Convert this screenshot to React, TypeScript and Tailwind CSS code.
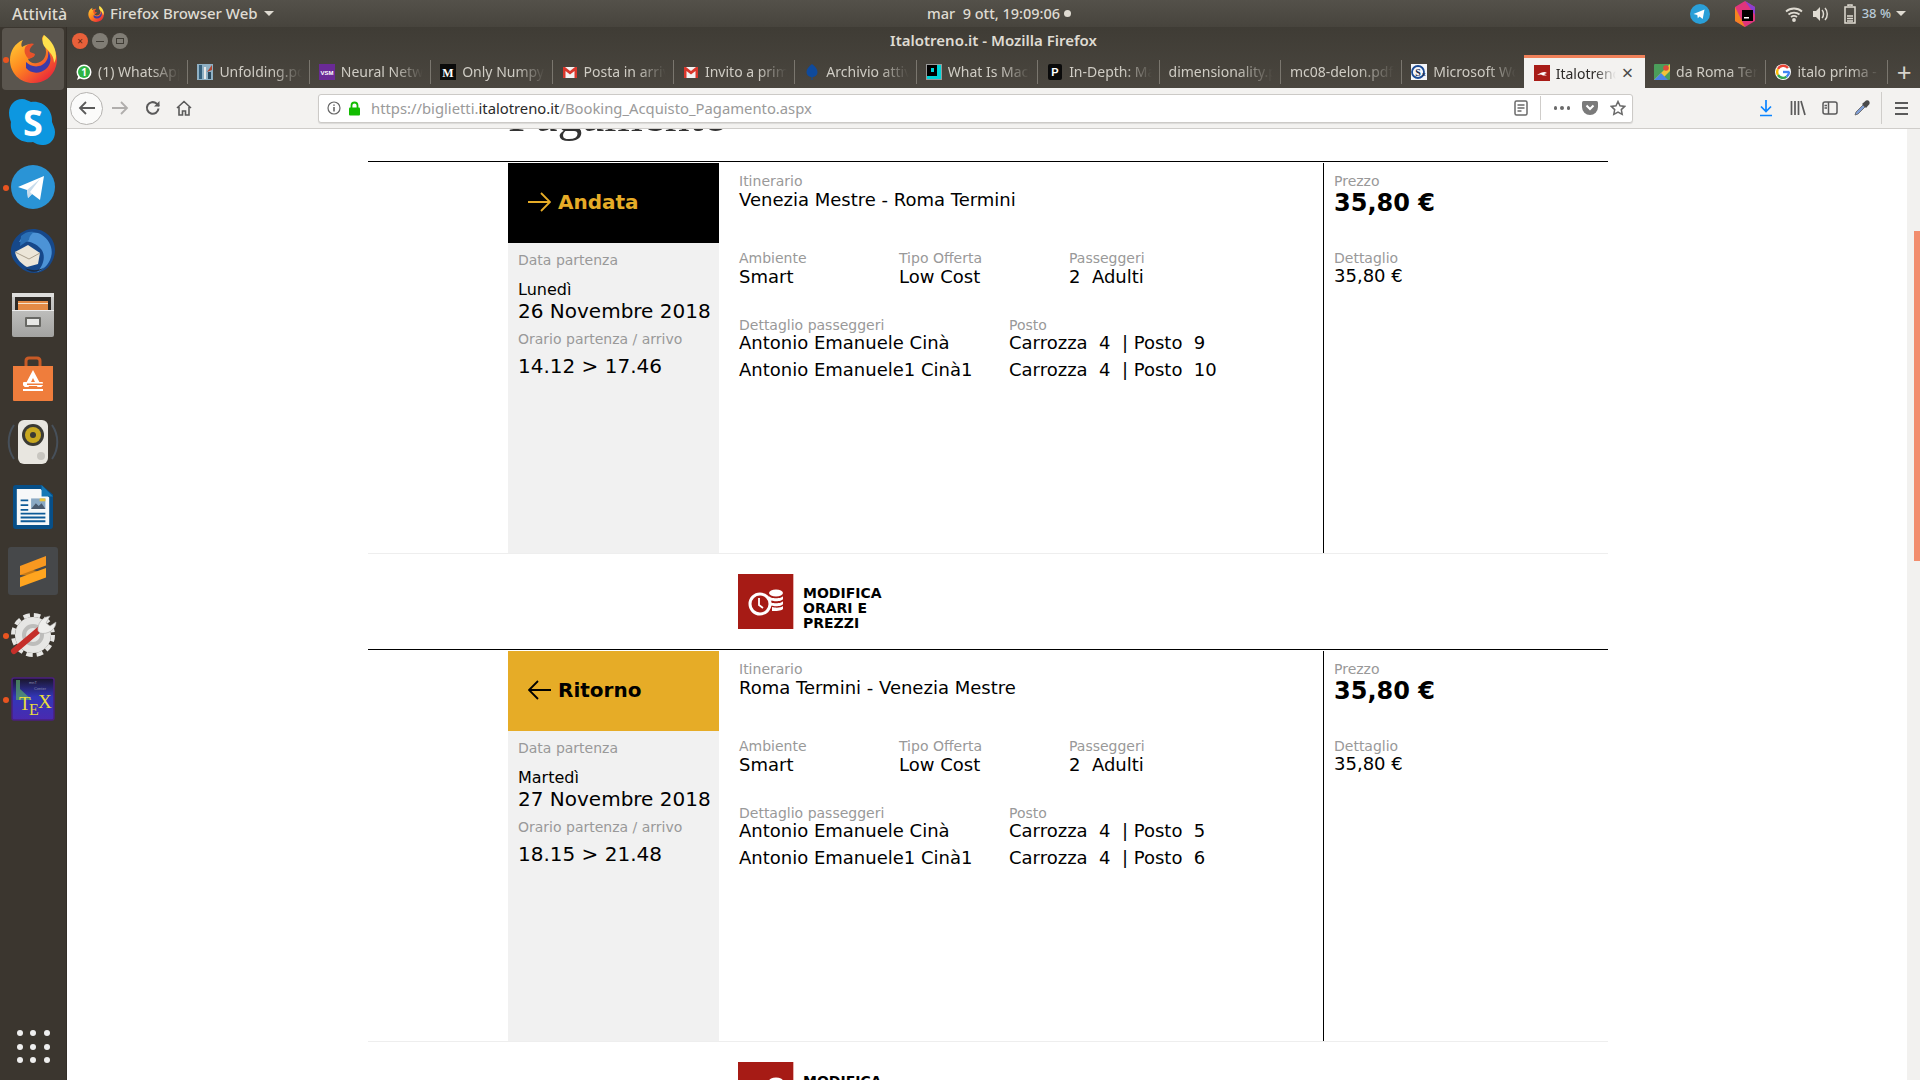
import React from "react";

const sans = "font-['DejaVu_Sans',sans-serif]";
const ui = "font-['Noto_Sans',sans-serif]";

// --- favicons ---
const Gmail = () => (
  <svg width="16" height="16" viewBox="0 0 16 16">
    <rect x="1" y="3" width="14" height="11" fill="#f2f2f2" />
    <path d="M1 3h2l5 4 5-4h2v11h-2.500V7L8 10.500 3.500 7v7H1z" fill="#d9372c" />
  </svg>
);
const tabs: { label: string; icon: React.ReactNode; active?: boolean }[] = [
  {
    label: "(1) WhatsApp",
    icon: (
      <svg width="16" height="18" viewBox="0 0 16 18">
        <circle cx="8" cy="9" r="7.500" fill="#fff" />
        <path d="M1 17l1.500-4.500L5 15z" fill="#fff" />
        <circle cx="8" cy="9" r="6" fill="#2fb344" />
        <text x="8" y="12.500" textAnchor="middle" fontSize="10" fontWeight="700" fill="#fff" fontFamily="Noto Sans">1</text>
      </svg>
    ),
  },
  {
    label: "Unfolding.pdf",
    icon: (
      <svg width="16" height="16" viewBox="0 0 16 16">
        <rect width="16" height="16" fill="#8fb0c4" />
        <rect x="2" y="1" width="3" height="14" fill="#35607c" />
        <rect x="7" y="3" width="2" height="12" fill="#e8e8e8" />
        <path d="M10 8l5-7v5z" fill="#b2452f" />
        <rect x="11" y="8" width="3" height="7" fill="#2a4a60" />
      </svg>
    ),
  },
  {
    label: "Neural Network",
    icon: (
      <svg width="16" height="16" viewBox="0 0 16 16">
        <rect width="16" height="16" fill="#6a2a96" />
        <text x="8" y="10.500" textAnchor="middle" fontSize="6" fontWeight="700" fill="#fff" fontFamily="Liberation Sans">VSM</text>
      </svg>
    ),
  },
  {
    label: "Only Numpy",
    icon: (
      <svg width="16" height="16" viewBox="0 0 16 16">
        <rect width="16" height="16" fill="#0b0b0b" />
        <text x="8" y="12.500" textAnchor="middle" fontSize="12" fontWeight="700" fill="#fff" fontFamily="Liberation Serif">M</text>
      </svg>
    ),
  },
  { label: "Posta in arrivo", icon: <Gmail /> },
  { label: "Invito a prima", icon: <Gmail /> },
  {
    label: "Archivio attività",
    icon: (
      <svg width="16" height="18" viewBox="0 0 16 18">
        <path d="M8 1c3 2 5.500 5 5.500 8S11 14 8 14s-5.500-2-5.500-5S5 3 8 1z" fill="#0f4a9c" />
        <rect x="7.500" y="13" width="1" height="4" fill="#0f4a9c" />
      </svg>
    ),
  },
  {
    label: "What Is Machine",
    icon: (
      <svg width="16" height="18" viewBox="0 0 16 18">
        <rect x="0" y="1" width="16" height="16" fill="#999" />
        <rect x="1" y="2" width="14" height="14" fill="#00d5d8" />
        <rect x="1" y="2" width="10" height="11" fill="#000" />
        <rect x="5" y="5" width="3" height="4" fill="#00d5d8" />
      </svg>
    ),
  },
  {
    label: "In-Depth: Machine",
    icon: (
      <svg width="16" height="16" viewBox="0 0 16 16">
        <rect width="14" height="16" x="1" rx="2" fill="#0a0a0a" />
        <text x="8" y="12" textAnchor="middle" fontSize="11" fontWeight="700" fill="#fff" fontFamily="Liberation Sans">P</text>
      </svg>
    ),
  },
  { label: "dimensionality.pdf", icon: null },
  { label: "mc08-delon.pdf", icon: null },
  {
    label: "Microsoft Word",
    icon: (
      <svg width="16" height="16" viewBox="0 0 16 16">
        <rect width="16" height="16" fill="#f4f6fa" />
        <circle cx="7" cy="8" r="6" fill="none" stroke="#1b4a94" strokeWidth="1.800" />
        <text x="7" y="11.500" textAnchor="middle" fontSize="10" fontWeight="700" fill="#1b2a4a" fontFamily="Liberation Serif">S</text>
        <text x="13" y="12" textAnchor="middle" fontSize="6" fontWeight="700" fill="#1b2a4a" fontFamily="Liberation Sans">x</text>
      </svg>
    ),
  },
  {
    label: "Italotreno.it",
    active: true,
    icon: (
      <svg width="16" height="16" viewBox="0 0 16 16">
        <rect width="16" height="16" fill="#a81c17" />
        <path d="M3 10c3-2 5-3 8-3l2 1-3 1 3 1.500H9L7 9.500z" fill="#fff" />
      </svg>
    ),
  },
  {
    label: "da Roma Termini",
    icon: (
      <svg width="16" height="18" viewBox="0 0 16 18">
        <rect y="1" width="16" height="16" rx="1" fill="#4b9e5b" />
        <path d="M0 17L16 1v7l-9 9z" fill="#f2c33b" />
        <path d="M0 17l7-7 7 7z" fill="#4c84e8" />
        <circle cx="12" cy="5" r="2.800" fill="#dc4b3e" />
      </svg>
    ),
  },
  {
    label: "italo prima - Google",
    icon: (
      <svg width="16" height="16" viewBox="0 0 16 16">
        <circle cx="8" cy="8" r="8" fill="#fff" />
        <path d="M14.500 8H8" stroke="#4285f4" strokeWidth="2.400" fill="none" />
        <path d="M13 4A6 6 0 0 0 3 5" stroke="#ea4335" strokeWidth="2.400" fill="none" />
        <path d="M3 5a6 6 0 0 0 0 6" stroke="#fbbc05" strokeWidth="2.400" fill="none" />
        <path d="M3 11a6 6 0 0 0 8.500 1.800" stroke="#34a853" strokeWidth="2.400" fill="none" />
        <path d="M11.500 12.800A6 6 0 0 0 14 8" stroke="#4285f4" strokeWidth="2.400" fill="none" />
      </svg>
    ),
  },
];

// --- dock icons ---
const FirefoxIcon = ({ size = 54 }: { size?: number }) => (
  <svg width={size} height={size} viewBox="0 0 54 54">
    <defs>
      <linearGradient id="ffa" x1="0" y1="0" x2="0.800" y2="1">
        <stop offset="0" stopColor="#ffd93b" />
        <stop offset="0.500" stopColor="#ff8a1f" />
        <stop offset="1" stopColor="#e8213c" />
      </linearGradient>
    </defs>
    <path d="M38 3c1 4 3 6 7 10 6 7 7 14 5 21-3 11-12 17-23 17C14 51 4 41 4 28 4 19 9 11 17 8c-2 3-2 5-1 7 3-2 7-3 10-3-3 3-5 5-4 8l6 2c1 3-4 4-6 5 1 3 5 5 9 4 5-1 9-5 9-11 0-6-3-10-4-13 0-2 1-3 2-4z" fill="url(#ffa)" />
    <path d="M38 3c4 3 12 10 12 21 0 3-1 5-2 7 0-9-7-13-10-17-2-3-2-7 0-11z" fill="#ffe14d" />
    <path d="M20 30c4 4 10 6 16 3 5-3 7-8 6-14 4 6 3 14-2 18-6 5-15 5-20-1z" fill="#3d3aa8" />
    <path d="M20 14c3-3 7-3 8-2-3 3-5 5-4 8l5 2c0 3-4 4-6 5-4-3-6-9-3-13z" fill="#e8512a" />
  </svg>
);

const Dock = () => {
  const items: { dot?: boolean; active?: boolean; icon: React.ReactNode }[] = [
    { active: true, dot: true, icon: <FirefoxIcon /> },
    {
      icon: (
        <svg width="50" height="50" viewBox="0 0 50 50">
          <path d="M14 1c4 0 6 2 9 3 12-2 22 8 21 20 1 3 3 6 3 10 0 8-6 14-13 13-3 0-6-1-9-3C12 46 1 36 3 24c-1-3-2-5-2-9C1 7 7 1 14 1z" fill="#0d97e0" />
          <text x="25" y="38" textAnchor="middle" fontSize="36" fontWeight="700" fill="#fff" fontFamily="Open Sans">S</text>
        </svg>
      ),
    },
    {
      dot: true,
      icon: (
        <svg width="46" height="46" viewBox="0 0 46 46">
          <circle cx="23" cy="23" r="22" fill="#2a94d6" />
          <path d="M8 23l26-11-4 24-8-6-4 4-1-8z" fill="#fff" />
          <path d="M17 26l13-11-10 13 2 2-4 4z" fill="#c8dcec" />
        </svg>
      ),
    },
    {
      icon: (
        <svg width="48" height="48" viewBox="0 0 48 48">
          <path d="M24 2c12 0 22 9 22 21s-9 23-20 23c-6 0-11-2-15-6C4 34 2 29 2 24 2 13 12 2 24 2z" fill="#16488a" />
          <path d="M10 15c5-9 15-12 23-7 9 6 12 16 8 25-3 6-7 10-13 12 7-7 9-17 4-23-6-7-15-9-22-7z" fill="#4c93d6" />
          <path d="M12 9c4-4 9-5 13-4-3 2-5 5-5 8l-9 6z" fill="#2a6fb5" />
          <path d="M6 25l13-7 12 8-2 11-11 3c-6-3-11-9-12-15z" fill="#ece6d8" />
          <path d="M6 25l14 7 11-6" stroke="#a99f8c" strokeWidth="1" fill="none" />
          <path d="M16 41c7 3 14 3 20-1-5 5-14 7-20 1z" fill="#1d2a3c" />
        </svg>
      ),
    },
    {
      icon: (
        <svg width="44" height="46" viewBox="0 0 44 46">
          <defs>
            <linearGradient id="cab" x1="0" y1="0" x2="0" y2="1">
              <stop offset="0" stopColor="#cfcfcd" />
              <stop offset="1" stopColor="#a3a3a1" />
            </linearGradient>
          </defs>
          <rect x="1" y="1" width="42" height="44" rx="2" fill="url(#cab)" />
          <rect x="1" y="1" width="42" height="4" fill="#dededc" />
          <rect x="4" y="5" width="36" height="13" fill="#2e2a26" />
          <rect x="7" y="9" width="30" height="9" fill="#e38a45" />
          <rect x="7" y="11" width="30" height="1" fill="#f5e2cc" />
          <rect x="1" y="18" width="42" height="1" fill="#eee" />
          <rect x="14" y="25" width="16" height="10" rx="1" fill="#686864" />
          <rect x="16" y="27" width="12" height="6" fill="#e8e8e6" />
        </svg>
      ),
    },
    {
      icon: (
        <svg width="42" height="46" viewBox="0 0 42 46">
          <path d="M14 12V5q0-3 3-3h8q3 0 3 3v7" fill="none" stroke="#c85a26" strokeWidth="3" />
          <path d="M1 10h40v34q0 1-1 1H2q-1 0-1-1z" fill="#ef7d3c" />
          <path d="M21 14l9 17h-4.500L21 22l-4.500 9H12z" fill="#fff" />
          <rect x="11" y="26" width="20" height="4" rx="1" fill="#fff" />
          <rect x="15" y="27.500" width="16" height="1.500" fill="#ef7d3c" />
          <rect x="11" y="33" width="20" height="2" fill="#fff" />
        </svg>
      ),
    },
    {
      icon: (
        <svg width="52" height="52" viewBox="0 0 52 52">
          <path d="M7 8a30 30 0 0 0 0 34M45 8a30 30 0 0 1 0 34" fill="none" stroke="#47505a" strokeWidth="2" />
          <rect x="11" y="3" width="30" height="44" rx="6" fill="#e8e6e0" />
          <circle cx="26" cy="18" r="11" fill="#3a3a34" />
          <circle cx="26" cy="18" r="8" fill="#c8a820" />
          <circle cx="26" cy="18" r="3" fill="#3a3a34" />
          <circle cx="34" cy="39" r="4" fill="#c8c6c0" />
        </svg>
      ),
    },
    {
      icon: (
        <svg width="40" height="46" viewBox="0 0 42 46">
          <path d="M3 0h27l12 10v33q0 3-3 3H3q-3 0-3-3V3q0-3 3-3z" fill="#074f88" />
          <path d="M4 4h25l9 9v29H4z" fill="#f6f8f9" />
          <path d="M30 0l12 12H30z" fill="#1578b5" />
          <path d="M8 15h8v2H8zm0 5h8v2H8zm0 5h8v2H8zm0 4h26v2H8zm0 4h26v2H8zm0 4h26v2H8z" fill="#0d5a97" />
          <rect x="19" y="14" width="15" height="11" fill="#8aa9c4" />
          <path d="M19 25l5-6 3 3 3-3 4 6z" fill="#4a5a6e" />
          <rect x="28" y="14" width="6" height="3" fill="#e8c43c" />
        </svg>
      ),
    },
    {
      icon: (
        <svg width="50" height="48" viewBox="0 0 50 48">
          <rect width="50" height="48" rx="3" fill="#46484a" />
          <path d="M12 19l26 8v3l-26-2z" fill="#c77a17" />
          <path d="M12 19L38 9v9.500L12 28z" fill="#f89820" />
          <path d="M38 21v9.500L12 40v-9.500z" fill="#ffa51f" />
        </svg>
      ),
    },
    {
      dot: true,
      icon: (
        <svg width="48" height="44" viewBox="0 0 48 44">
          <circle cx="24" cy="22" r="18" fill="#e6e6e4" />
          <circle cx="24" cy="22" r="20" fill="none" stroke="#e6e6e4" strokeWidth="4" strokeDasharray="6.500 4" />
          <circle cx="24" cy="22" r="9" fill="none" stroke="#bdbdbb" strokeWidth="4" />
          <path d="M5 38L31 16" stroke="#c52f2a" strokeWidth="6" strokeLinecap="round" />
          <path d="M29 18c-1-7 4-14 12-15l-4 7 4 3 6-4c0 8-9 13-16 11z" fill="#eeeeec" stroke="#a8a8a6" strokeWidth="0.600" />
        </svg>
      ),
    },
    {
      dot: true,
      icon: (
        <svg width="44" height="44" viewBox="0 0 44 44">
          <defs>
            <linearGradient id="texbg" x1="0" y1="0" x2="0" y2="1">
              <stop offset="0" stopColor="#1a1528" />
              <stop offset="0.450" stopColor="#3236b8" />
              <stop offset="1" stopColor="#4a2ab0" />
            </linearGradient>
          </defs>
          <rect x="1" y="1" width="42" height="42" rx="2" fill="url(#texbg)" stroke="#4b1f80" strokeWidth="1.500" />
          <path d="M5 3h4v9l12 11H5z" fill="#58a66a" opacity="0.700" />
          <text x="18" y="7" fontSize="4" fill="#8a8aa8" fontFamily="Liberation Sans">mnT</text>
          <text x="23" y="13" fontSize="4" fill="#8a8aa8" fontFamily="Liberation Sans">Center</text>
          <text x="8" y="33" fontSize="19" fill="#eadf3a" fontFamily="Liberation Serif">T</text>
          <text x="18" y="38" fontSize="16" fill="#eadf3a" fontFamily="Liberation Serif">E</text>
          <text x="27" y="31" fontSize="19" fill="#eadf3a" fontFamily="Liberation Serif">X</text>
        </svg>
      ),
    },
  ];
  return (
    <div className="flex w-[67px] shrink-0 flex-col border-r border-[#332e28] bg-[#3b362f]">
      {items.map((item, i) => (
        <div key={i} className="relative flex h-[64px] w-full items-center justify-center">
          {item.active && <div className="absolute left-[2px] top-[1px] h-[62px] w-[62px] rounded bg-[#5a554e]" />}
          {item.dot && <div className="absolute left-[3px] top-[30px] h-[6px] w-[6px] rounded-full bg-[#e95420]" />}
          <div className="relative flex">{item.icon}</div>
        </div>
      ))}
      <div className="mt-auto mb-[17px] grid grid-cols-3 gap-[7.500px] self-center">
        {[0, 1, 2, 3, 4, 5, 6, 7, 8].map((n) => (
          <div key={n} className="h-[6px] w-[6px] rounded-full bg-[#eeeeee]" />
        ))}
      </div>
    </div>
  );
};

const TopBar = () => (
  <div className={`${ui} flex h-[27px] shrink-0 items-center bg-gradient-to-b from-[#54514a] to-[#47443d] text-[15px] font-medium text-[#dfdbd2]`}>
    <div className="flex w-[927px] items-center">
      <span className="ml-[12px] w-[75px] text-[16px]">Attività</span>
      <FirefoxIcon size={18} />
      <span className="ml-[5px]">Firefox Browser Web</span>
      <div className="ml-[6px] h-0 w-0 border-x-[5px] border-t-[5px] border-x-transparent border-t-[#dfdbd2]" />
    </div>
    <span className="whitespace-pre text-[14.500px]">mar  9 ott, 19:09:06</span>
    <div className="ml-[4px] h-[7px] w-[7px] rounded-full bg-[#dfdbd2]" />
    <div className="ml-auto flex items-center">
      <svg width="20" height="20" viewBox="0 0 20 20">
        <circle cx="10" cy="10" r="10" fill="#2a9fd8" />
        <path d="M3.500 10l11-4.500-1.800 9.500-3.200-2.400-1.700 1.700-.5-3.400z" fill="#fff" />
      </svg>
      <svg width="22" height="26" viewBox="0 0 22 26" className="ml-[24px]">
        <path d="M11 0l10 6v14l-10 6-10-6V6z" fill="#e0357c" />
        <path d="M11 0l10 6v8z" fill="#8a3fd0" />
        <path d="M1 6v14l10 6z" fill="#f58220" />
        <rect x="8" y="9" width="11" height="11" fill="#000" />
        <rect x="10" y="16" width="5" height="1.500" fill="#fff" />
      </svg>
      <svg width="18" height="16" viewBox="0 0 18 16" className="ml-[29px]" fill="none" stroke="#dfdbd2" strokeWidth="1.800">
        <path d="M1 5.500c4.500-4 11.500-4 16 0M3.500 8.500c3-2.600 8-2.600 11 0M6 11c1.800-1.300 4.200-1.300 6 0" />
        <circle cx="9" cy="14" r="1" fill="#dfdbd2" />
      </svg>
      <svg width="16" height="16" viewBox="0 0 16 16" className="ml-[10px]" fill="#dfdbd2">
        <path d="M0 5h3l4-4v14l-4-4H0z" />
        <path d="M9 4c2 2 2 6 0 8M12 2c3 3 3 9 0 12" stroke="#dfdbd2" strokeWidth="1.500" fill="none" />
      </svg>
      <svg width="12" height="20" viewBox="0 0 12 20" className="ml-[15px]" fill="none" stroke="#dfdbd2" strokeWidth="1.500">
        <path d="M4 2V1h4v1M1 3h10v16H1z" />
        <path d="M3 12h6M3 14.500h6M3 17h6" />
      </svg>
      <span className="ml-[6px] text-[13px] text-[#b9cbd8]">38 %</span>
      <div className="ml-[5px] mr-[14px] h-0 w-0 border-x-[5px] border-t-[5px] border-x-transparent border-t-[#dfdbd2]" />
    </div>
  </div>
);

const Tab = ({ label, icon, active }: { label: string; icon: React.ReactNode; active?: boolean }) => (
  <div
    className={
      active
        ? "flex h-[33px] w-[121.400px] shrink-0 items-center gap-[6px] border-t-[3px] border-[#f0815a] bg-[#f3f2f0] pl-[10px] pr-[12px] text-[#2c2a28]"
        : "flex h-[33px] w-[121.400px] shrink-0 items-center gap-[6px] pl-[9px] pr-[8px] text-[#cfccc4]"
    }
  >
    {icon && <div className="flex w-[16px] shrink-0 justify-center">{icon}</div>}
    <span className="min-w-0 flex-1 overflow-hidden whitespace-nowrap [mask-image:linear-gradient(to_right,black_65%,transparent)]">{label}</span>
    {active && <span className="text-[20px] leading-none text-[#4a4a48]">×</span>}
  </div>
);

const TabBar = () => (
  <div className={`${ui} flex h-[33px] items-end text-[14px]`}>
    {tabs.map((t, i) => (
      <React.Fragment key={t.label}>
        <Tab {...t} />
        {i < tabs.length - 1 && !t.active && !tabs[i + 1].active && (
          <div className="-ml-px h-[24px] w-px self-center bg-[#7a766e]" />
        )}
      </React.Fragment>
    ))}
    <div className="-ml-px h-[24px] w-px self-center bg-[#7a766e]" />
    <span className="ml-[9px] self-center text-[26px] leading-none text-[#d6d3cc]">+</span>
  </div>
);

const ic = "#5a5a5a";

const Toolbar = () => (
  <div className="flex h-[41px] items-center border-b border-[#cfcdca] bg-[#f3f2f0]">
    <div className="ml-[3px] flex h-[33px] w-[33px] items-center justify-center rounded-full border border-[#b5b3b0] bg-[#fbfbfa]">
      <svg width="18" height="16" viewBox="0 0 18 16" fill="none" stroke={ic} strokeWidth="1.800">
        <path d="M17 8H2M8 2L2 8l6 6" />
      </svg>
    </div>
    <svg width="18" height="16" viewBox="0 0 18 16" className="ml-[8px]" fill="none" stroke="#b0aeac" strokeWidth="1.800">
      <path d="M1 8h15M10 2l6 6-6 6" />
    </svg>
    <svg width="16" height="16" viewBox="0 0 16 16" className="ml-[16px]" fill="none" stroke={ic} strokeWidth="2.100">
      <path d="M13.500 8.500A5.800 5.800 0 1 1 11.500 3.500L14 6" />
      <path d="M14.500 1v5.500H9" fill={ic} stroke="none" />
    </svg>
    <svg width="16" height="16" viewBox="0 0 16 16" className="ml-[15px]" fill="none" stroke={ic} strokeWidth="1.600">
      <path d="M1 8l7-6.500L15 8M3 7v8h3.500v-4h3v4H13V7" />
    </svg>
    <div className="ml-[126px] flex h-[29px] w-[1315px] items-center rounded-[3px] border border-[#cccac7] bg-white shadow-[0_1px_1px_rgba(0,0,0,0.1)]">
      <svg width="14" height="14" viewBox="0 0 14 14" className="ml-[8px]" fill="none" stroke="#666" strokeWidth="1.200">
        <circle cx="7" cy="7" r="6" />
        <path d="M7 6v4.500M7 3.500v1.300" strokeWidth="1.600" />
      </svg>
      <svg width="13" height="15" viewBox="0 0 13 15" className="ml-[7px]">
        <path d="M3.500 7V4.500a3 3 0 0 1 6 0V7" fill="none" stroke="#12bc00" strokeWidth="1.800" />
        <rect x="1" y="6.500" width="11" height="8" rx="1" fill="#12bc00" />
      </svg>
      <span className={`${ui} ml-[10px] text-[14.800px] text-[#9a9a9a]`}>
        https://biglietti.<span className="text-[#2a2a2a]">italotreno.it</span>/Booking_Acquisto_Pagamento.aspx
      </span>
      <div className="ml-auto flex items-center">
        <svg width="14" height="16" viewBox="0 0 14 16" fill="none" stroke="#6a6a6a" strokeWidth="1.500">
          <rect x="1" y="1" width="12" height="14" rx="1.500" />
          <path d="M3.500 5h7M3.500 8h7M3.500 11h4" />
        </svg>
        <div className="ml-[12px] h-[24px] w-px bg-[#cfcdca]" />
        <div className="ml-[13px] flex gap-[3px]">
          <div className="h-[3.500px] w-[3.500px] rounded-full bg-[#6a6a6a]" />
          <div className="h-[3.500px] w-[3.500px] rounded-full bg-[#6a6a6a]" />
          <div className="h-[3.500px] w-[3.500px] rounded-full bg-[#6a6a6a]" />
        </div>
        <svg width="16" height="14" viewBox="0 0 16 14" className="ml-[12px]">
          <path d="M1.500 0h13Q16 0 16 1.500V6A8 8 0 0 1 0 6V1.500Q0 0 1.500 0z" fill="#7a7a7a" />
          <path d="M4.500 4.500L8 8l3.500-3.500" fill="none" stroke="#fff" strokeWidth="2" />
        </svg>
        <svg width="16" height="16" viewBox="0 0 16 16" className="ml-[12px] mr-[6px]" fill="none" stroke="#6a6a6a" strokeWidth="1.500">
          <path d="M8 1.500l2 4.300 4.700.6-3.400 3.200.9 4.700L8 12l-4.200 2.300.9-4.700L1.300 6.400 6 5.800z" />
        </svg>
      </div>
    </div>
    <svg width="14" height="18" viewBox="0 0 14 18" className="ml-[126px]" fill="none" stroke="#0a84ff" strokeWidth="1.700">
      <path d="M7 1v11M2 7.500L7 12.500l5-5M1 16.500h12" />
    </svg>
    <svg width="16" height="16" viewBox="0 0 16 16" className="ml-[17px]" fill="none" stroke={ic} strokeWidth="1.700">
      <path d="M1.500 1v14M5 1v14M8.500 1v14M11 1l4 14" />
    </svg>
    <svg width="16" height="14" viewBox="0 0 16 14" className="ml-[16px]" fill="none" stroke={ic} strokeWidth="1.500">
      <rect x="1" y="1" width="14" height="12" rx="2" />
      <path d="M6.500 1v12M2.500 4.500h2.500M2.500 7h2.500" />
    </svg>
    <svg width="16" height="16" viewBox="0 0 16 16" className="ml-[16px]">
      <path d="M1 15l1-3 7-7 2 2-7 7z" fill="#7f9ed6" stroke="#5c5c5c" strokeWidth="0.800" />
      <path d="M8 4l4-3.500q2-.5 3 .5t.5 3L12 8z" fill="#4a4a4a" />
    </svg>
    <div className="ml-[11px] h-[32px] w-px bg-[#cfcdca]" />
    <div className="ml-[13px] flex w-[13px] flex-col gap-[3.500px]">
      <div className="h-[2px] bg-[#5a5a5a]" />
      <div className="h-[2px] bg-[#5a5a5a]" />
      <div className="h-[2px] bg-[#5a5a5a]" />
    </div>
  </div>
);

const Label = ({ children, className = "" }: { children: React.ReactNode; className?: string }) => (
  <div className={`text-[14px] leading-[16px] text-[#999999] ${className}`}>{children}</div>
);

const Value = ({ children, className = "" }: { children: React.ReactNode; className?: string }) => (
  <div className={`whitespace-pre text-[18px] leading-[22px] text-black ${className}`}>{children}</div>
);

type Trip = {
  title: string;
  back?: boolean;
  route: string;
  day: string;
  date: string;
  time: string;
  seats: [string, string];
};

const TripRow = ({ trip }: { trip: Trip }) => (
  <div className="flex h-[392px] border-t border-black">
    <div className="ml-[140px] mt-[1px] flex w-[211px] flex-col bg-[#f1f1f1]">
      <div
        className={
          trip.back
            ? "flex h-[80px] items-center gap-[7px] bg-[#e6ac27] pb-[2px] pl-[20px] text-black"
            : "flex h-[80px] items-center gap-[7px] bg-black pb-[2px] pl-[20px] text-[#e6ac27]"
        }
      >
        <svg width="23" height="20" viewBox="0 0 23 20" fill="none" stroke="currentColor" strokeWidth="1.800">
          {trip.back ? <path d="M23 10H1M10 1l-9 9 9 9" /> : <path d="M0 10h22M13 1l9 9-9 9" />}
        </svg>
        <span className="text-[20px] font-bold">{trip.title}</span>
      </div>
      <div className="pl-[10px]">
        <Label className="mt-[9px]">Data partenza</Label>
        <div className="mt-[11px] text-[16px] leading-[21px] text-black">{trip.day}</div>
        <div className="whitespace-nowrap text-[20px] leading-[22px] text-black">{trip.date}</div>
        <Label className="mt-[9px]">Orario partenza / arrivo</Label>
        <div className="mt-[6px] text-[20px] leading-[26px] text-black">{trip.time}</div>
      </div>
    </div>
    <div className="mt-[1px] w-[605px] border-r border-black pl-[20px] pt-[10px]">
      <Label>Itinerario</Label>
      <Value>{trip.route}</Value>
      <div className="mt-[39px] flex">
        <div className="w-[160px]">
          <Label>Ambiente</Label>
          <Value>Smart</Value>
        </div>
        <div className="w-[170px]">
          <Label>Tipo Offerta</Label>
          <Value>Low Cost</Value>
        </div>
        <div>
          <Label>Passeggeri</Label>
          <Value>{"2  Adulti"}</Value>
        </div>
      </div>
      <div className="mt-[29px] flex">
        <div className="w-[270px]">
          <Label>Dettaglio passeggeri</Label>
          <Value className="-mt-[1px]">Antonio Emanuele Cinà</Value>
          <Value className="mt-[5px]">Antonio Emanuele1 Cinà1</Value>
        </div>
        <div>
          <Label>Posto</Label>
          <Value className="-mt-[1px]">{trip.seats[0]}</Value>
          <Value className="mt-[5px]">{trip.seats[1]}</Value>
        </div>
      </div>
    </div>
    <div className="mt-[1px] pl-[10px] pt-[10px]">
      <Label>Prezzo</Label>
      <div className="text-[24px] font-bold leading-[28px] text-black">35,80 €</div>
      <Label className="mt-[33px]">Dettaglio</Label>
      <Value className="-mt-[1px]">35,80 €</Value>
    </div>
  </div>
);

const EditBlock = () => (
  <div className="ml-[370px] flex h-[95px] items-center gap-[9px]">
    <div className="box-content flex h-[55px] w-[55px] shrink-0 items-center justify-center border-r border-[#e8b0ad] bg-[#a61b15]">
      <svg width="38" height="30" viewBox="0 0 38 30" fill="none">
        <ellipse cx="29" cy="6" rx="7" ry="3.500" fill="#fff" />
        <path d="M22 9c1 3 13 3 14 0v3c-1 3-13 3-14 0zM22 14c1 3 13 3 14 0v3c-1 3-13 3-14 0zM25 20c3 1 9 1 11-1v3c-2 2-7 2-11 2z" fill="#fff" />
        <circle cx="13" cy="17" r="10" stroke="#fff" strokeWidth="3" fill="#a61b15" />
        <path d="M12 11v7l4 3" stroke="#fff" strokeWidth="1.800" />
      </svg>
    </div>
    <div className="mt-[14px] text-[14px] font-bold leading-[15px] text-black">
      MODIFICA
      <br />
      ORARI E
      <br />
      PREZZI
    </div>
  </div>
);

const trips: Trip[] = [
  {
    title: "Andata",
    route: "Venezia Mestre - Roma Termini",
    day: "Lunedì",
    date: "26 Novembre 2018",
    time: "14.12 > 17.46",
    seats: ["Carrozza  4  | Posto  9", "Carrozza  4  | Posto  10"],
  },
  {
    title: "Ritorno",
    back: true,
    route: "Roma Termini - Venezia Mestre",
    day: "Martedì",
    date: "27 Novembre 2018",
    time: "18.15 > 21.48",
    seats: ["Carrozza  4  | Posto  5", "Carrozza  4  | Posto  6"],
  },
];

export default function App() {
  return (
    <div className="flex h-[1080px] w-[1920px] flex-col overflow-hidden bg-white">
      <TopBar />
      <div className="flex min-h-0 flex-1">
        <Dock />
        <div className="flex min-w-0 flex-1 flex-col">
          <div className="relative bg-gradient-to-b from-[#3f3c35] to-[#4a463f]">
            <div className={`${ui} flex h-[28px] items-center justify-center pb-[2px] text-[15px] font-semibold text-[#dfdbd2]`}>
              Italotreno.it - Mozilla Firefox
            </div>
            <div className="absolute left-[5px] top-[6px] flex gap-[4px]">
              <div className="flex h-[16px] w-[16px] items-center justify-center rounded-full bg-[#e8603a] text-[10px] leading-none text-[#5a2412]">×</div>
              <div className="flex h-[16px] w-[16px] items-center justify-center rounded-full bg-[#807d75]">
                <div className="h-px w-[8px] bg-[#3f3c35]" />
              </div>
              <div className="flex h-[16px] w-[16px] items-center justify-center rounded-full bg-[#807d75]">
                <div className="h-[6px] w-[8px] border border-[#3f3c35]" />
              </div>
            </div>
            <TabBar />
          </div>
          <Toolbar />
          <div className={`${sans} flex min-h-0 flex-1`}>
            <div className="min-w-0 flex-1 overflow-hidden">
              <div className="-mt-[38px] ml-[441px] h-[70px] font-['Liberation_Serif',serif] text-[49.500px] leading-[48px] text-[#333333]">Pagamento</div>
              <div className="ml-[301px] w-[1240px]">
                <TripRow trip={trips[0]} />
                <div className="border-t border-[#eeeeee]">
                  <EditBlock />
                </div>
                <TripRow trip={trips[1]} />
                <div className="border-t border-[#eeeeee]">
                  <EditBlock />
                </div>
              </div>
            </div>
            <div className="w-[13px] shrink-0 bg-[#f2f1ef] pl-[7px] pt-[102px]">
              <div className="h-[330px] w-[6px] bg-[#f28d6d]" />
            </div>
          </div>
        </div>
      </div>
    </div>
  );
}
